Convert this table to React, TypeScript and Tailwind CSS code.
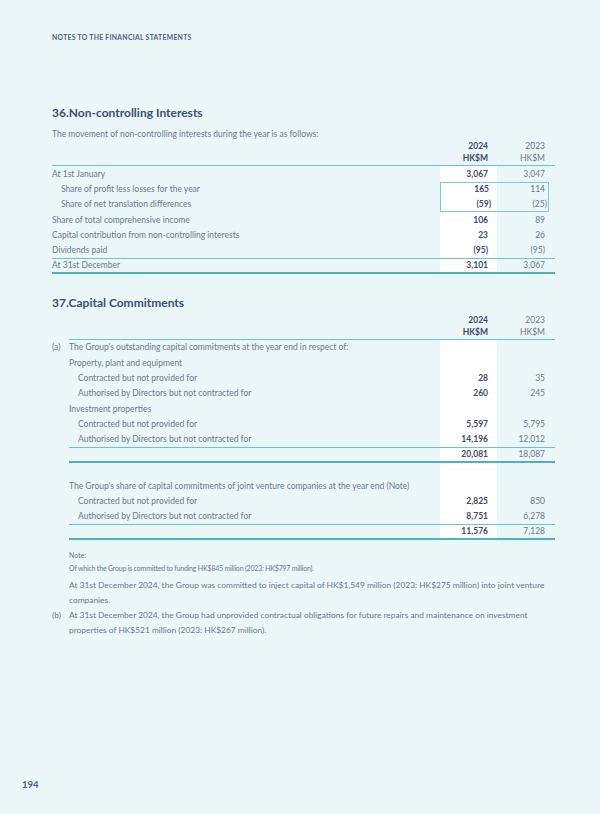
import React from "react";

const font = { fontFamily: "Lato, 'Open Sans', sans-serif" };

type RowProps = {
  label?: React.ReactNode;
  indent?: boolean;
  cur?: string;
  prev?: string;
  line?: "thin" | "thick";
};

function Row({ label, indent, cur, prev, line }: RowProps) {
  const border =
    line === "thin"
      ? "border-b border-[#6cc4c9]"
      : line === "thick"
      ? "border-b-2 border-[#4ab4bb]"
      : "";
  return (
    <div className={`flex h-[15.4px] items-stretch ${border}`}>
      <div className={`flex flex-1 items-center ${indent ? "pl-[9px]" : ""}`}>{label}</div>
      <div className="flex w-[57px] items-center justify-end bg-white pr-[9px] font-bold text-[#3b4a6b]">
        {cur}
      </div>
      <div className="flex w-[58px] items-center justify-end pr-[10px]">{prev}</div>
    </div>
  );
}

function Header() {
  return (
    <div className="flex items-end border-b-[1.5px] border-[#6cc4c9] pb-[1px] leading-[12px]">
      <div className="flex-1" />
      <div className="w-[57px] pr-[9px] text-right font-bold text-[#3b4a6b]">
        2024
        <br />
        HK$M
      </div>
      <div className="w-[58px] pr-[10px] text-right">
        2023
        <br />
        HK$M
      </div>
    </div>
  );
}

export default function App() {
  return (
    <div
      className="relative h-[814px] w-[600px] bg-[#eaf6f7] text-[8.5px] text-[#6b7890]"
      style={font}
    >
      <div className="pl-[52px] pr-[45px] pt-[32px]">
        <div className="text-[6.8px] font-bold tracking-[0.3px] text-[#4d5e80]">
          NOTES TO THE FINANCIAL STATEMENTS
        </div>

        {/* 36 */}
        <h2 className="mt-[62px] text-[12px] font-bold leading-[18px] text-[#3d4f78]">
          36.Non-controlling Interests
        </h2>
        <p className="mt-[6px] leading-[12px]">
          The movement of non-controlling interests during the year is as follows:
        </p>
        <div>
          <Header />
          <Row label="At 1st January" cur="3,067" prev="3,047" />
          <div className="flex">
            <div className="flex-1">
              <div className="flex h-[15.4px] items-center pl-[9px]">
                Share of profit less losses for the year
              </div>
              <div className="flex h-[15.4px] items-center pl-[9px]">
                Share of net translation differences
              </div>
            </div>
            <div className="mr-[6px] w-[109px] border border-[#7ccacf]">
              <div className="flex h-[14.4px]">
                <div className="flex w-[56px] items-center justify-end bg-white pr-[8px] font-bold text-[#3b4a6b]">
                  165
                </div>
                <div className="flex flex-1 items-center justify-end pr-[3px]">114</div>
              </div>
              <div className="flex h-[14.4px]">
                <div className="flex w-[56px] items-center justify-end bg-white pr-[6px] font-bold text-[#3b4a6b]">
                  (59)
                </div>
                <div className="flex flex-1 items-center justify-end pr-[1px]">(25)</div>
              </div>
            </div>
          </div>
          <Row label="Share of total comprehensive income" cur="106" prev="89" />
          <Row label="Capital contribution from non-controlling interests" cur="23" prev="26" />
          <Row label="Dividends paid" cur="(95)" prev="(95)" line="thin" />
          <Row label="At 31st December" cur="3,101" prev="3,067" line="thick" />
        </div>

        {/* 37 */}
        <h2 className="mt-[20px] text-[12px] font-bold leading-[18px] text-[#3d4f78]">
          37.Capital Commitments
        </h2>
        <div className="mt-[2px] pl-[17px]">
          <Header />
          <Row
            label={
              <span className="-ml-[17px] flex">
                <span className="w-[17px]">(a)</span>
                The Group's outstanding capital commitments at the year end in respect of:
              </span>
            }
          />
          <Row label="Property, plant and equipment" />
          <Row indent label="Contracted but not provided for" cur="28" prev="35" />
          <Row indent label="Authorised by Directors but not contracted for" cur="260" prev="245" />
          <Row label="Investment properties" />
          <Row indent label="Contracted but not provided for" cur="5,597" prev="5,795" />
          <Row
            indent
            label="Authorised by Directors but not contracted for"
            cur="14,196"
            prev="12,012"
            line="thin"
          />
          <Row cur="20,081" prev="18,087" line="thick" />
          <Row />
          <Row label="The Group's share of capital commitments of joint venture companies at the year end (Note)" />
          <Row indent label="Contracted but not provided for" cur="2,825" prev="850" />
          <Row
            indent
            label="Authorised by Directors but not contracted for"
            cur="8,751"
            prev="6,278"
            line="thin"
          />
          <Row cur="11,576" prev="7,128" line="thick" />

          <div className="mt-[9px] text-[7px] leading-[13px]">
            <div>Note:</div>
            <div className="tracking-[-0.2px]">
              Of which the Group is committed to funding HK$845 million (2023: HK$797 million).
            </div>
          </div>
          <p className="mt-[3px] text-[8.4px] leading-[14.5px]">
            At 31st December 2024, the Group was committed to inject capital of HK$1,549 million
            (2023: HK$275 million) into joint venture companies.
          </p>
        </div>
        <div className="mt-[1px] flex text-[8.4px] leading-[14.5px]">
          <span className="w-[17px] shrink-0">(b)</span>
          <p>
            At 31st December 2024, the Group had unprovided contractual obligations for future
            repairs and maintenance on investment properties of HK$521 million (2023: HK$267
            million).
          </p>
        </div>
      </div>

      <div className="absolute left-[22px] top-[778px] text-[9.5px] font-bold text-[#4d5e80]">194</div>
    </div>
  );
}
